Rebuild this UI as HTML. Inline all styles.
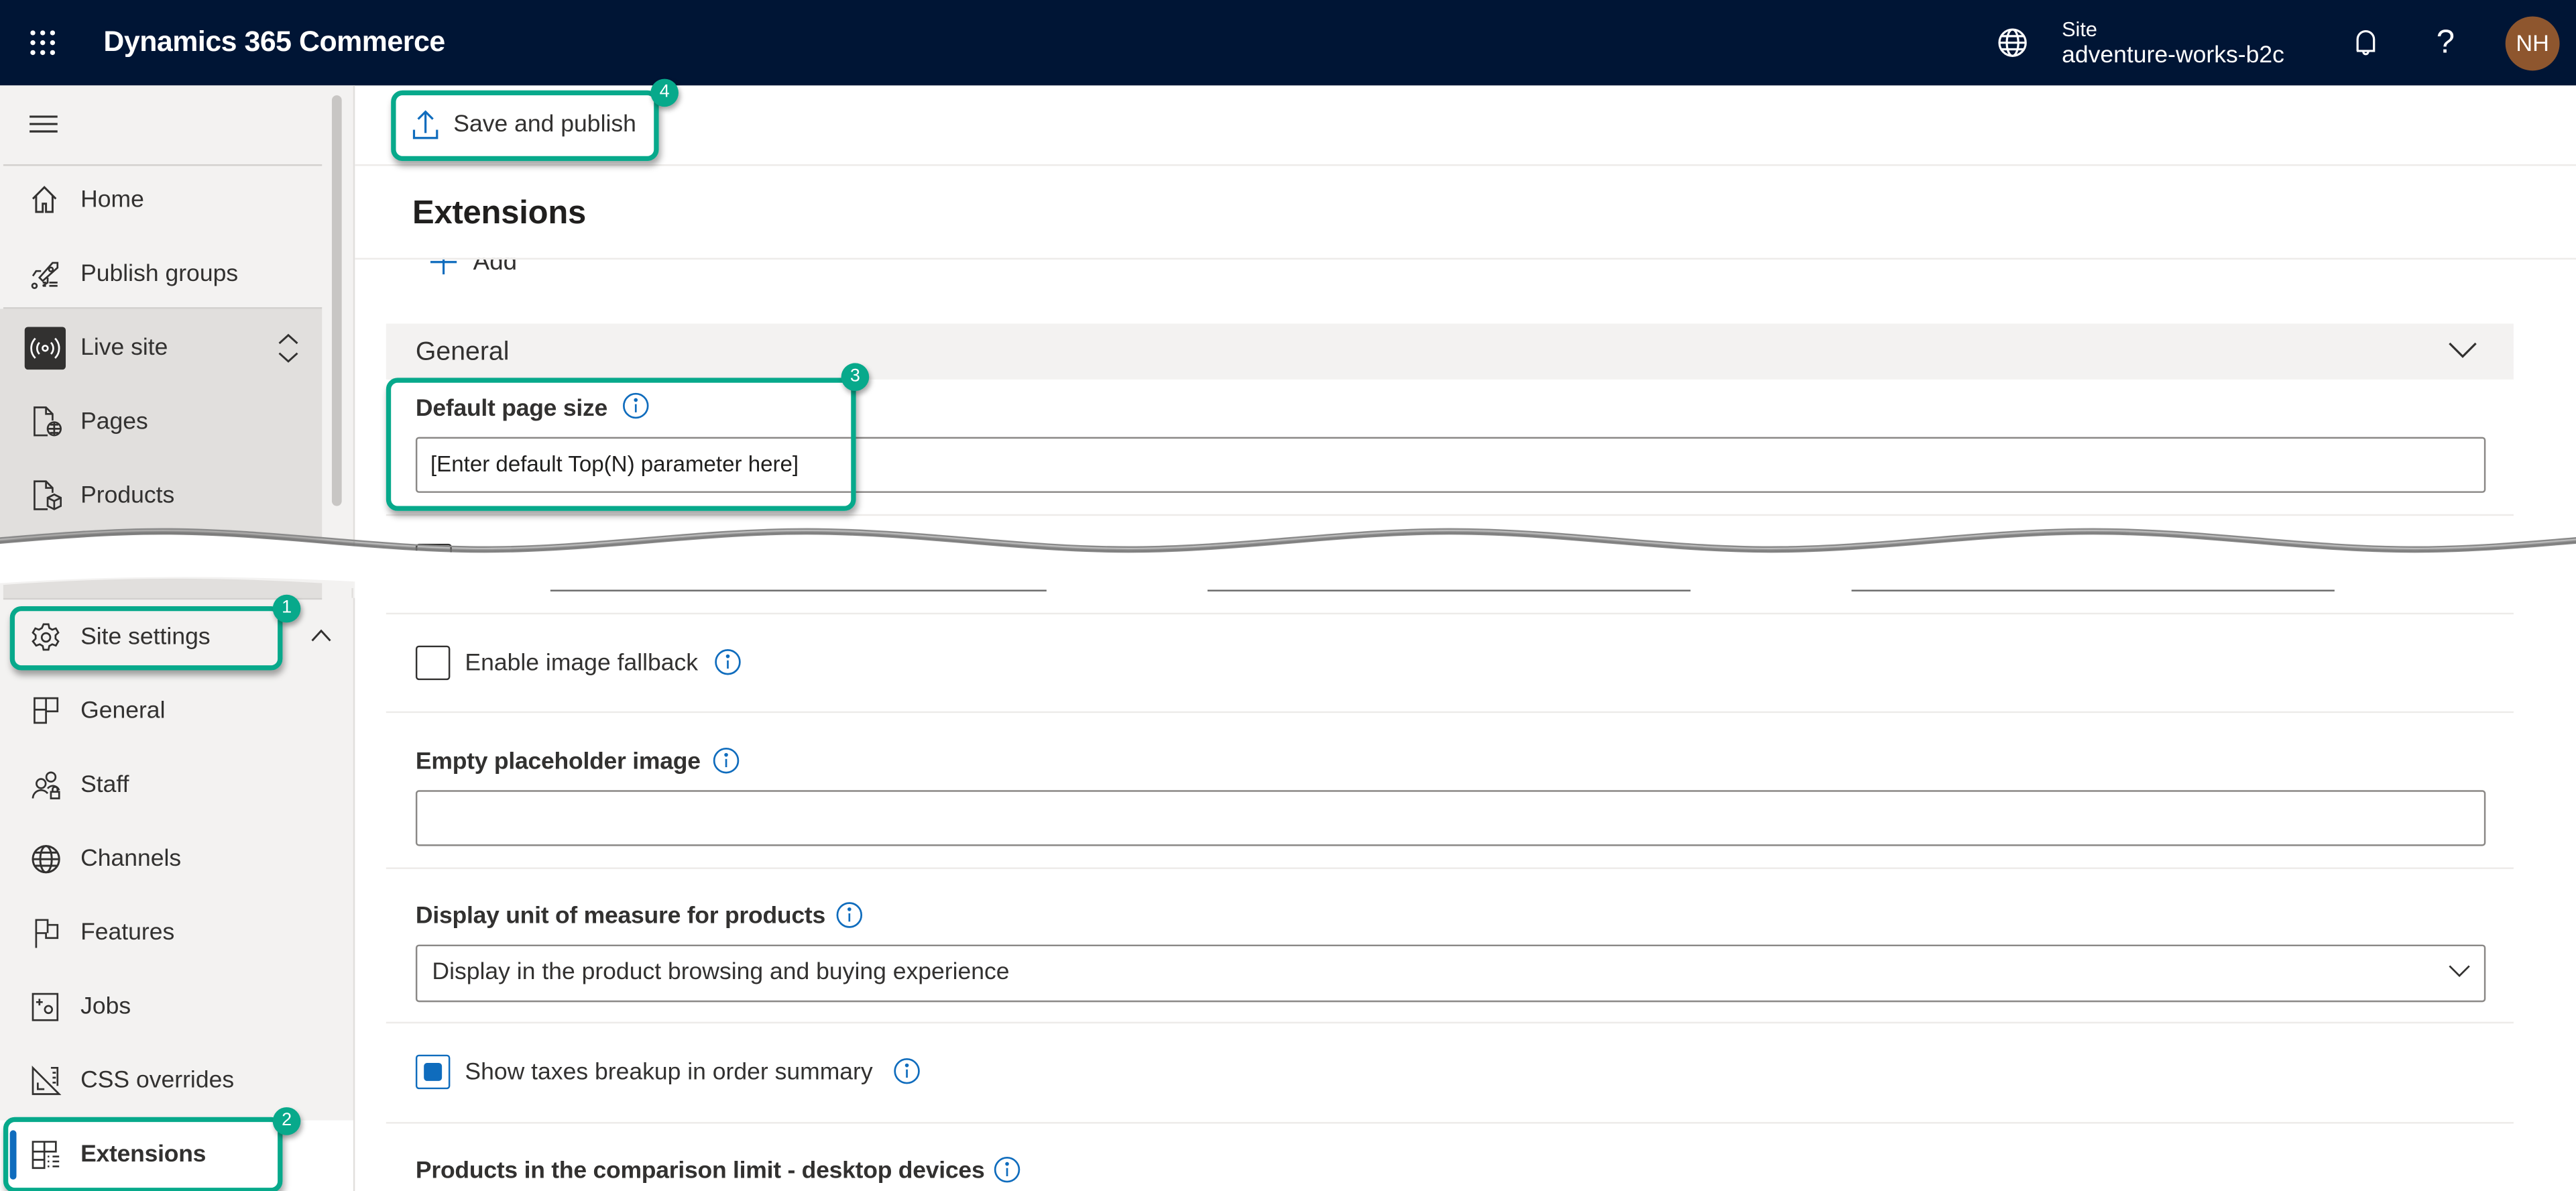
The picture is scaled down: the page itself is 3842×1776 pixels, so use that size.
<!DOCTYPE html>
<html><head><meta charset="utf-8"><style>
html,body{margin:0;padding:0;width:3842px;height:1776px;overflow:hidden;background:#fff}
#s{position:absolute;left:0;top:0;width:1568px;height:725px;transform:scale(2.4503,2.4497);transform-origin:0 0;font-family:"Liberation Sans",sans-serif;color:#323130;overflow:hidden}
.a{position:absolute}
.t{position:absolute;white-space:nowrap;font-size:14.5px;letter-spacing:0;line-height:1}
.b{font-weight:bold;letter-spacing:-0.1px}
.hl{position:absolute;height:1px;background:#edebe9}
.box{position:absolute;border:3px solid #07a98b;border-radius:7px;box-shadow:1px 3px 4px rgba(0,0,0,.35)}
.bd{position:absolute;width:17px;height:17px;border-radius:50%;background:#07a98b;color:#fff;font-size:11px;text-align:center;line-height:17px;box-shadow:1px 2px 3px rgba(0,0,0,.35)}
.in{position:absolute;border:1px solid #8a8886;border-radius:2px;background:#fff}
svg.i{position:absolute;overflow:visible}
</style></head><body><div id="s">
<!-- header -->
<div class="a" style="left:0;top:0;width:1568px;height:52px;background:#001535"></div>
<svg class="i" style="left:18px;top:18px" width="16" height="16"><g fill="#fff"><circle cx="2" cy="2" r="1.5"/><circle cx="8" cy="2" r="1.5"/><circle cx="14" cy="2" r="1.5"/><circle cx="2" cy="8" r="1.5"/><circle cx="8" cy="8" r="1.5"/><circle cx="14" cy="8" r="1.5"/><circle cx="2" cy="14" r="1.5"/><circle cx="8" cy="14" r="1.5"/><circle cx="14" cy="14" r="1.5"/></g></svg>
<div class="t" style="left:63px;top:17px;color:#fff;font-size:17.5px;font-weight:bold;letter-spacing:-0.2px">Dynamics 365 Commerce</div>
<svg class="i" style="left:1216px;top:17px" width="18" height="18" fill="none" stroke="#fff" stroke-width="1.3"><circle cx="9" cy="9" r="8"/><ellipse cx="9" cy="9" rx="3.5" ry="8"/><path d="M1 9H17M2.5 5H15.5M2.5 13H15.5"/></svg>
<div class="t" style="left:1255px;top:12px;color:#fff;font-size:12.5px">Site</div>
<div class="t" style="left:1255px;top:27px;color:#fff;font-size:14.5px">adventure-works-b2c</div>
<svg class="i" style="left:1432px;top:17px" width="16" height="18" fill="none" stroke="#fff" stroke-width="1.3"><path d="M3 14V7a5 5 0 0 1 10 0v7H2.5h11"/><path d="M6.5 14.5a1.5 1.5 0 0 0 3 0"/></svg>
<div class="t" style="left:1483px;top:16px;color:#fff;font-size:20px">?</div>
<div class="a" style="left:1525px;top:10px;width:33px;height:33px;border-radius:50%;background:#8e562e;color:#fff;font-size:14px;line-height:33px;text-align:center">NH</div>

<!-- sidebar top -->
<div class="a" style="left:0;top:52px;width:215px;height:300px;background:#f3f2f1;border-right:1px solid #e1dfdd"></div>
<div class="a" style="left:0;top:188px;width:196px;height:140px;background:#e1dfdd"></div>
<div class="a" style="left:202px;top:58px;width:6px;height:250px;background:#c8c6c4;border-radius:3px"></div>
<div class="a" style="left:2px;top:100px;width:194px;height:1px;background:#d2d0ce"></div>
<div class="a" style="left:2px;top:187px;width:194px;height:1px;background:#d2d0ce"></div>
<svg class="i" style="left:18px;top:70px" width="18" height="12" stroke="#323130" stroke-width="1.3"><path d="M0 1H17M0 5.5H17M0 10H17"/></svg>
<svg class="i" style="left:19px;top:113px" width="16" height="17" fill="none" stroke="#323130" stroke-width="1.2"><path d="M1 8L8 1l7 7M3 6v10h4v-5h2v5h4V6"/></svg>
<div class="t" style="left:49px;top:115px">Home</div>
<svg class="i" style="left:19px;top:158px" width="18" height="18" fill="none" stroke="#323130" stroke-width="1.1"><path d="M5 11L13 2h3v3l-9 8zM6 7H3l-2 3M10 11v3l-3 2"/><circle cx="12" cy="6" r="1.2"/><circle cx="2" cy="16" r="1.4"/><path d="M7 14h2M7 16h2M11 14h5M11 16h5"/></svg>
<div class="t" style="left:49px;top:160px">Publish groups</div>
<div class="a" style="left:15px;top:199px;width:25px;height:26px;background:#323130;border-radius:2px"></div>
<svg class="i" style="left:18px;top:205px" width="19" height="14" fill="none" stroke="#fff" stroke-width="1.1"><circle cx="9.5" cy="7" r="1.6"/><path d="M6 3.5a5 5 0 0 0 0 7M13 3.5a5 5 0 0 1 0 7M3.5 1a8.5 8.5 0 0 0 0 12M15.5 1a8.5 8.5 0 0 1 0 12"/></svg>
<div class="t" style="left:49px;top:205px">Live site</div>
<svg class="i" style="left:169px;top:203px" width="13" height="18" fill="none" stroke="#323130" stroke-width="1.2"><path d="M1 6l5.5-5 5.5 5M1 12l5.5 5 5.5-5"/></svg>
<svg class="i" style="left:20px;top:247px" width="18" height="19" fill="none" stroke="#323130" stroke-width="1.1"><path d="M9 18H1V1h7l4 4v4M8 1v4h4"/><circle cx="13" cy="14" r="4"/><path d="M9 14h8M13 10v8M10.5 11.5h5M10.5 16.5h5"/></svg>
<div class="t" style="left:49px;top:250px">Pages</div>
<svg class="i" style="left:20px;top:292px" width="18" height="19" fill="none" stroke="#323130" stroke-width="1.1"><path d="M9 18H1V1h7l4 4v3M8 1v4h4"/><path d="M13 9l4 2v5l-4 2-4-2v-5zM9 11l4 2 4-2M13 13v5"/></svg>
<div class="t" style="left:49px;top:295px">Products</div>

<!-- main top -->
<svg class="i" style="left:251px;top:67px" width="16" height="18" fill="none" stroke="#0f6cbd" stroke-width="1.3"><path d="M8 14V1M3.5 5.5L8 1l4.5 4.5M1 12v5h14v-5"/></svg>
<div class="t" style="left:276px;top:69px">Save and publish</div>
<div class="hl" style="left:216px;top:100px;width:1352px"></div>
<div class="t b" style="left:251px;top:120px;font-size:20px;color:#201f1e">Extensions</div>
<div class="a" style="left:216px;top:157px;width:1352px;height:20px;overflow:hidden">
 <svg class="i" style="left:45px;top:-5px" width="18" height="18" stroke="#0f6cbd" stroke-width="1.3"><path d="M9 0V15M1 7.5H17"/></svg>
 <div class="t" style="left:72px;top:-5px;font-size:15px">Add</div>
</div>
<div class="hl" style="left:216px;top:157px;width:1352px"></div>
<div class="a" style="left:235px;top:197px;width:1295px;height:34px;background:#f3f2f1"></div>
<div class="t" style="left:253px;top:207px;font-size:16px">General</div>
<svg class="i" style="left:1490px;top:208px" width="18" height="11" fill="none" stroke="#323130" stroke-width="1.3"><path d="M1 1l8 8 8-8"/></svg>
<div class="t b" style="left:253px;top:242px">Default page size</div>
<svg class="i" style="left:379px;top:239px" width="16" height="16" fill="none" stroke="#0f6cbd" stroke-width="1.1"><circle cx="8" cy="8" r="7.3"/><path d="M8 7v5"/><circle cx="8" cy="4.5" r=".6" fill="#0f6cbd"/></svg>
<div class="in" style="left:253px;top:266px;width:1258px;height:32px"></div>
<div class="t" style="left:262px;top:276px;font-size:13.5px;color:#201f1e">[Enter default Top(N) parameter here]</div>
<div class="hl" style="left:235px;top:313px;width:1295px"></div>
<div class="a" style="left:253px;top:331px;width:20px;height:10px;border:1px solid #323130;border-radius:2px"></div>

<!-- tear -->
<svg class="i" style="left:0;top:0" width="1568" height="725">
<defs><filter id="sh" x="-5%" y="-50%" width="110%" height="300%"><feGaussianBlur stdDeviation="1"/></filter></defs>
<path d="M-97 335.5 C-31 335.5 33 324.5 99 324.5 S229 335.5 295 335.5 S425 324.5 491 324.5 S621 335.5 687 335.5 S817 324.5 883 324.5 S1013 335.5 1078 335.5 S1208 324.5 1274 324.5 S1404 335.5 1470 335.5 S1600 324.5 1666 324.5" fill="none" stroke="#6e6e6e" stroke-width="3" filter="url(#sh)"/>
<path d="M-97 333 C-31 333 33 322 99 322 S229 333 295 333 S425 322 491 322 S621 333 687 333 S817 322 883 322 S1013 333 1078 333 S1208 322 1274 322 S1404 333 1470 333 S1600 322 1666 322" fill="none" stroke="#8a8a8a" stroke-width="1"/>
<path d="M-97 334 C-31 334 33 323 99 323 S229 334 295 334 S425 323 491 323 S621 334 687 334 S817 323 883 323 S1013 334 1078 334 S1208 323 1274 323 S1404 334 1470 334 S1600 323 1666 323 V380 H-97Z" fill="#fff" transform="translate(0,2.5)"/>
</svg>
<div class="a" style="left:335px;top:359px;width:302px;height:1px;background:#6b6b6b"></div>
<div class="a" style="left:735px;top:359px;width:294px;height:1px;background:#6b6b6b"></div>
<div class="a" style="left:1127px;top:359px;width:294px;height:1px;background:#6b6b6b"></div>

<!-- sidebar bottom -->
<svg class="i" style="left:0;top:348px" width="216" height="20"><path d="M0 7 Q100 0 216 6 V20 H0Z" fill="#f3f2f1"/><path d="M2 8 Q100 1 196 7 V16 H2Z" fill="#e1dfdd"/></svg>
<div class="a" style="left:0;top:364px;width:215px;height:361px;background:#f3f2f1;border-right:1px solid #e1dfdd"></div>
<div class="a" style="left:0;top:358px;width:215px;height:6px;border-right:1px solid #e1dfdd;box-sizing:border-box"></div>
<div class="a" style="left:2px;top:364px;width:194px;height:1px;background:#d2d0ce"></div>
<svg class="i" style="left:19px;top:379px" width="18" height="18" fill="none" stroke="#323130" stroke-width="1.1"><path d="M7.5 1h3l.5 2.3 1.8 1 2.2-.8 1.5 2.6-1.7 1.6v2.1l1.7 1.6-1.5 2.6-2.2-.8-1.8 1-.5 2.3h-3l-.5-2.3-1.8-1-2.2.8L1 11.4l1.7-1.6V7.7L1 6.1l1.5-2.6 2.2.8 1.8-1z"/><circle cx="9" cy="9" r="2.6"/></svg>
<div class="t" style="left:49px;top:381px">Site settings</div>
<svg class="i" style="left:189px;top:383px" width="13" height="8" fill="none" stroke="#323130" stroke-width="1.2"><path d="M1 7l5.5-6 5.5 6"/></svg>
<svg class="i" style="left:20px;top:424px" width="16" height="17" fill="none" stroke="#323130" stroke-width="1.1"><path d="M1 1h14v8H8v7H1zM8 1v8M1 8h7"/></svg>
<div class="t" style="left:49px;top:426px">General</div>
<svg class="i" style="left:19px;top:469px" width="18" height="18" fill="none" stroke="#323130" stroke-width="1.1"><circle cx="12" cy="4" r="2.8"/><circle cx="6" cy="8" r="2.8"/><path d="M1 17a5 5 0 0 1 9 -3M10 11a4 4 0 0 1 7 1"/><rect x="12" y="13" width="5" height="4"/><path d="M13 13v-1.5a1.5 1.5 0 0 1 3 0V13"/></svg>
<div class="t" style="left:49px;top:471px">Staff</div>
<svg class="i" style="left:19px;top:514px" width="18" height="18" fill="none" stroke="#323130" stroke-width="1.2"><circle cx="9" cy="9" r="8"/><ellipse cx="9" cy="9" rx="3.5" ry="8"/><path d="M1 9H17M2.5 5H15.5M2.5 13H15.5"/></svg>
<div class="t" style="left:49px;top:516px">Channels</div>
<svg class="i" style="left:21px;top:559px" width="16" height="19" fill="none" stroke="#323130" stroke-width="1.1"><path d="M1 18V1h7v3h6v8H7V9H1M8 4v5"/></svg>
<div class="t" style="left:49px;top:561px">Features</div>
<svg class="i" style="left:19px;top:604px" width="17" height="18" fill="none" stroke="#323130" stroke-width="1.1"><rect x="1" y="1" width="15" height="16"/><circle cx="10.5" cy="10.5" r="2.2"/><path d="M5 4v4M3 6h4"/></svg>
<div class="t" style="left:49px;top:606px">Jobs</div>
<svg class="i" style="left:19px;top:649px" width="18" height="18" fill="none" stroke="#323130" stroke-width="1.1"><path d="M1 1l16 16H1zM4 10v4h4M12 1h4v11M13 4h2M13 7h2M13 10h2"/></svg>
<div class="t" style="left:49px;top:651px">CSS overrides</div>
<div class="a" style="left:0;top:682px;width:215px;height:43px;background:#fff"></div>
<div class="a" style="left:6px;top:688px;width:4px;height:30px;background:#0f6cbd;border-radius:2px"></div>
<svg class="i" style="left:19px;top:694px" width="18" height="18" fill="none" stroke="#323130" stroke-width="1.1"><path d="M1 1h14v6H8v10H1zM8 1v6M1 7h7M1 12h7M10 10h1M13 10h4M10 13h1M13 13h4M10 16h1M13 16h4"/></svg>
<div class="t b" style="left:49px;top:696px">Extensions</div>

<!-- main bottom -->
<div class="hl" style="left:235px;top:373px;width:1295px"></div>
<div class="a" style="left:253px;top:393px;width:19px;height:19px;border:1px solid #323130;border-radius:2px"></div>
<div class="t" style="left:283px;top:397px">Enable image fallback</div>
<svg class="i" style="left:435px;top:395px" width="16" height="16" fill="none" stroke="#0f6cbd" stroke-width="1.1"><circle cx="8" cy="8" r="7.3"/><path d="M8 7v5"/><circle cx="8" cy="4.5" r=".6" fill="#0f6cbd"/></svg>
<div class="hl" style="left:235px;top:433px;width:1295px"></div>
<div class="t b" style="left:253px;top:457px">Empty placeholder image</div>
<svg class="i" style="left:434px;top:455px" width="16" height="16" fill="none" stroke="#0f6cbd" stroke-width="1.1"><circle cx="8" cy="8" r="7.3"/><path d="M8 7v5"/><circle cx="8" cy="4.5" r=".6" fill="#0f6cbd"/></svg>
<div class="in" style="left:253px;top:481px;width:1258px;height:32px"></div>
<div class="hl" style="left:235px;top:528px;width:1295px"></div>
<div class="t b" style="left:253px;top:551px">Display unit of measure for products</div>
<svg class="i" style="left:509px;top:549px" width="16" height="16" fill="none" stroke="#0f6cbd" stroke-width="1.1"><circle cx="8" cy="8" r="7.3"/><path d="M8 7v5"/><circle cx="8" cy="4.5" r=".6" fill="#0f6cbd"/></svg>
<div class="in" style="left:253px;top:575px;width:1258px;height:33px"></div>
<div class="t" style="left:263px;top:585px">Display in the product browsing and buying experience</div>
<svg class="i" style="left:1490px;top:587px" width="14" height="8" fill="none" stroke="#323130" stroke-width="1.1"><path d="M1 1l6 6 6-6"/></svg>
<div class="hl" style="left:235px;top:622px;width:1295px"></div>
<div class="a" style="left:253px;top:642px;width:19px;height:19px;border:1px solid #0f6cbd;border-radius:2px;background:#fff"></div>
<div class="a" style="left:258px;top:647px;width:11px;height:11px;background:#0f6cbd;border-radius:2px"></div>
<div class="t" style="left:283px;top:646px">Show taxes breakup in order summary</div>
<svg class="i" style="left:544px;top:644px" width="16" height="16" fill="none" stroke="#0f6cbd" stroke-width="1.1"><circle cx="8" cy="8" r="7.3"/><path d="M8 7v5"/><circle cx="8" cy="4.5" r=".6" fill="#0f6cbd"/></svg>
<div class="hl" style="left:235px;top:683px;width:1295px"></div>
<div class="t b" style="left:253px;top:706px">Products in the comparison limit - desktop devices</div>
<svg class="i" style="left:605px;top:704px" width="16" height="16" fill="none" stroke="#0f6cbd" stroke-width="1.1"><circle cx="8" cy="8" r="7.3"/><path d="M8 7v5"/><circle cx="8" cy="4.5" r=".6" fill="#0f6cbd"/></svg>

<!-- callouts -->
<div class="box" style="left:238px;top:55px;width:157px;height:37px"></div>
<div class="bd" style="left:396px;top:48px">4</div>
<div class="box" style="left:235px;top:230px;width:280px;height:75px"></div>
<div class="bd" style="left:512px;top:221px">3</div>
<div class="box" style="left:6px;top:369px;width:160px;height:33px"></div>
<div class="bd" style="left:166px;top:362px">1</div>
<div class="box" style="left:2px;top:680px;width:164px;height:40px"></div>
<div class="bd" style="left:166px;top:674px">2</div>
</div></body></html>
